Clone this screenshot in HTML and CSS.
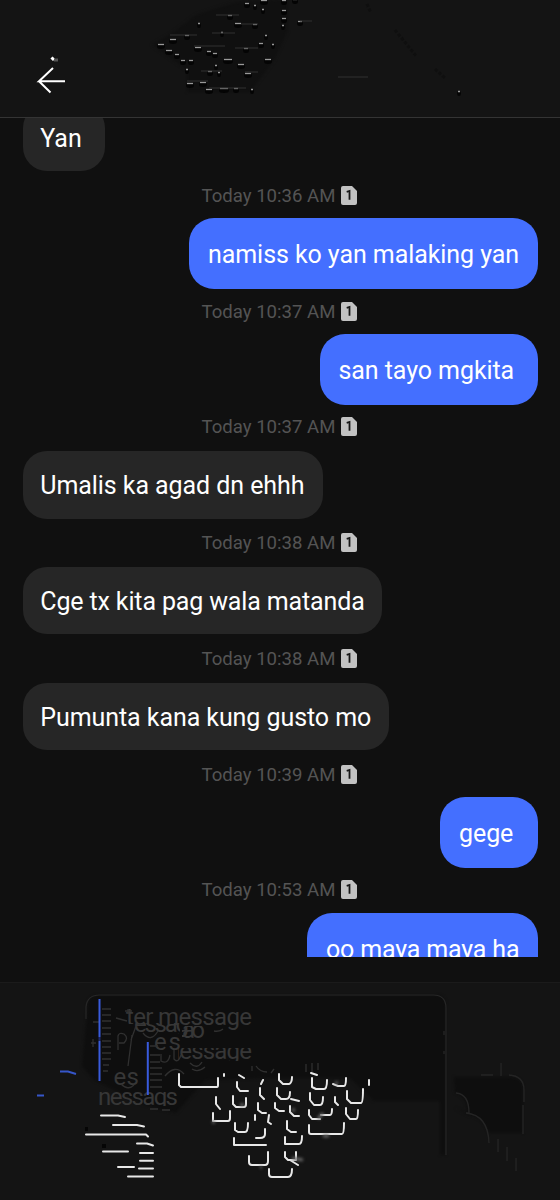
FILE: index.html
```html
<!DOCTYPE html>
<html lang="tl">
<head>
<meta charset="utf-8">
<title>Messages</title>
<link rel="stylesheet" href="styles.css">
</head>
<body>
<svg class="defs" width="0" height="0" aria-hidden="true">
  <symbol id="sim" viewBox="0 0 16 19"><path d="M2 0H11L16 5V17Q16 19 14 19H2Q0 19 0 17V2Q0 0 2 0Z" fill="#c2c2c2"/><path d="M5.7 5.8L8.5 5V13.8" fill="none" stroke="#171717" stroke-width="1.8"/></symbol>
</svg>
<main class="phone">
  <header class="header">
    <svg class="header-art" viewBox="0 0 560 117">
      <g class="soft"><path d="M196 15L236 2L288 0V30L274 60L250 92H187V70L152 45L174 32Z" fill="#101010"/></g>
      <g class="dents" id="dents"></g>
      <g class="thin"><path d="M216 15H239M241 24H258M170 35H197M212 33H235M194 46H225M235 48H258M201 71H222M245 72H258M187 81H208M209 88H246M338 77H368M300 21H312"/></g>
      <path d="M367 4L371 13M395 30L417 57M435 69L446 79" fill="none" stroke="#0f0f0f" stroke-width="3" stroke-dasharray="3 2"/>
      <path d="M65 81.300H39L53 68M39 81.300L50.500 92.500" class="arrow"/>
      <path d="M51.500 57.500L54 60" stroke="#fff" stroke-width="3"/><path d="M54 60H58" stroke="#555" stroke-width="3"/>
    </svg>
  </header>
  <section class="thread">
    <div class="bubble received first w-yan">Yan</div>
    <div class="group"><div class="time"><span>Today 10:36 AM</span><svg class="sim"><use href="#sim"/></svg></div><div class="bubble sent w-namiss">namiss ko yan malaking yan</div></div>
    <div class="group"><div class="time"><span>Today 10:37 AM</span><svg class="sim"><use href="#sim"/></svg></div><div class="bubble sent w-san">san tayo mgkita</div></div>
    <div class="group"><div class="time"><span>Today 10:37 AM</span><svg class="sim"><use href="#sim"/></svg></div><div class="bubble received w-umalis">Umalis ka agad dn ehhh</div></div>
    <div class="group"><div class="time"><span>Today 10:38 AM</span><svg class="sim"><use href="#sim"/></svg></div><div class="bubble received w-cge">Cge tx kita pag wala matanda</div></div>
    <div class="group"><div class="time"><span>Today 10:38 AM</span><svg class="sim"><use href="#sim"/></svg></div><div class="bubble received w-pumunta">Pumunta kana kung gusto mo</div></div>
    <div class="group"><div class="time"><span>Today 10:39 AM</span><svg class="sim"><use href="#sim"/></svg></div><div class="bubble sent w-gege">gege</div></div>
    <div class="group"><div class="time"><span>Today 10:53 AM</span><svg class="sim"><use href="#sim"/></svg></div><div class="bubble sent w-oo">oo maya maya ha</div></div>
  </section>
  <footer class="composer">
    <svg class="composer-art" viewBox="0 983 560 217">
      <defs>
        <clipPath id="c1"><path d="M120 1000H260V1033H158V1024H120Z"/></clipPath>
        <clipPath id="c2"><path d="M178 1048H260V1061H178Z"/></clipPath>
        <clipPath id="c3"><path d="M112 1066H140V1086H112Z"/></clipPath>
        <clipPath id="c4"><path d="M99 1090H178V1106H99Z"/></clipPath>
        <clipPath id="c5"><path d="M130 1023H180V1034H130ZM182 1026H205V1040H182Z"/></clipPath>
        <clipPath id="c6"><path d="M154 1036H182V1052H154Z"/></clipPath>
      </defs>
      <path class="soft" d="M88 1003Q90 995 100 995H436Q446 995 446 1007V1155H440V1101H374L350 1078H270L205 1080L176 1113L145 1105L94 1080L82 1066Z" fill="#0e0e0e"/>
      <path d="M86 1019V1007Q87 995 100 995H433Q446 995 446 1008V1155" fill="none" stroke="#272727" stroke-width="1.200"/>
      <path class="soft" d="M454 1077H508Q523 1077 523 1090V1133H489Q483 1116 468 1115L455 1108L467 1113Q469 1098 455 1092Z" fill="#0e0e0e"/>
      <path d="M481 1075H493M501 1063V1076M509 1075Q524 1076 524 1090V1102M523 1105V1134M456 1093Q469 1094 469 1113H466Q488 1115 489 1143M498 1139V1152M507 1147V1161M516 1158V1171M444 1031V1035M444 1051V1054" fill="none" stroke="#242424" stroke-width="1.400"/>
      <g class="ghost">
        <text x="126" y="1025" textLength="126" clip-path="url(#c1)">ter message</text>
        <text x="159" y="1059" textLength="93" clip-path="url(#c2)">message</text>
        <text x="92" y="1085" textLength="47" clip-path="url(#c3)">mes</text>
        <text x="98" y="1105" textLength="80" clip-path="url(#c4)">nessags</text>
        <text x="134" y="1032" textLength="55" clip-path="url(#c5)">essag</text>
        <text x="182" y="1038" textLength="23" clip-path="url(#c5)">ao</text>
        <text x="154" y="1050" textLength="27" clip-path="url(#c6)">es</text>
        <path class="ghost-lines" d="M102 1009H111M102 1015H111M102 1021H111M102 1028H111M102 1034H111M102 1041H111M102 1047H111M102 1053H111M102 1059H111M103 1065H109M103 1071H108M91 1043H96M93 1039V1047M93 1022H100M118 1050V1036Q119 1032 124 1034Q129 1038 124 1043H119M116 1018L127 1021M125 1011H132M128 1009V1014M128 1066L132 1035M136 1026L131 1040M143 1033Q151 1043 158 1031M150 1046H158M150 1055H160M150 1062H160M150 1068H162M150 1074H162M150 1080H162M150 1087H162M161 1054V1061Q168 1065 170 1055M174 1050V1059Q178 1064 181 1055M165 1076Q175 1064 184 1074M190 1063Q197 1070 202 1062M192 1069Q198 1073 205 1067M214 1031Q220 1032 223 1029M252 1066V1071M256 1066Q260 1072 267 1072M271 1073L274 1069M306 1064V1072M312 1063V1072M318 1063V1070M121 1084Q128 1091 134 1085M150 1109H158M162 1110H170"/>
      </g>
      <path d="M99.500 999V1037M99.500 1041V1081M147.800 1042V1095" fill="none" stroke="#395bdc" stroke-width="2"/>
      <path d="M99.500 1037V1041" stroke="#1c286f" stroke-width="2"/>
      <path d="M60 1071.500H68L76 1074M37 1095.500H44" fill="none" stroke="#3656c9" stroke-width="2"/>
      <path class="white" d="M101 1115.500H118L125 1117M113 1125H137L144 1126.500M86 1134.500H146L148 1136.500M137 1143.500H147L153 1145.500M103 1151.500H128M140 1153H153M140 1160.800H153M118 1167H134M139 1168.500H153M128 1176.500H153"/>
      <path class="white" d="M179 1074V1085L181 1087H217Q218 1087 218 1085V1078M224 1074V1076M239 1075L244 1078M237 1082V1087L240 1091H248M216 1097V1104L220 1109M233 1096V1104L236 1107H244Q246 1107 246 1104V1098M213 1113V1121H228Q230 1121 230 1118V1111M263 1080L261 1084M260 1088V1095L264 1099M279 1074V1080L283 1084H289Q292 1083 292 1077M277 1088V1095L281 1099H286Q290 1099 290 1092M291 1099L299 1101M258 1103V1110L262 1113H266M275 1103V1108L279 1111H284M290 1106V1112L294 1116H299M269 1115L268 1122L271 1124M255 1115V1120M235 1123V1130L238 1132H245Q248 1132 248 1123M265 1129V1134Q265 1138 260 1138H256M287 1121V1129L291 1132H296M234 1138V1145H266M285 1137V1144H299Q302 1144 302 1136M249 1156V1162Q249 1165 252 1165H265Q268 1165 268 1161V1152M285 1152V1157L288 1160H296V1152M290 1160L298 1165M269 1169V1174Q269 1177 272 1177H288Q292 1177 292 1169M311 1073L317 1075M312 1078V1087L316 1089H324Q327 1089 327 1080M333 1084L338 1086H344Q346 1086 346 1078M310 1093V1100L314 1105H320Q323 1105 323 1097M335 1097V1102L338 1105M347 1091V1099L351 1103H361Q363 1103 363 1089M309 1110V1115L312 1119H320M321 1115H330Q332 1115 332 1109M346 1108V1114L350 1119H356Q358 1119 358 1110M309 1125V1132Q309 1134 311 1134H342Q344 1134 344 1123M369 1080V1085"/>
      <path class="glow" d="M303 1160L292 1158M318 1119L323 1113M323 1136H329M240 1105H244M260 1167L262 1167M292 1110H295M335 1083H338M212 1122H215"/>
      <path d="M85 1129H88M102 1146H106" stroke="#050505" stroke-width="4"/>
    </svg>
  </footer>
</main>
<script src="art.js"></script>
</body>
</html>
```
FILE: styles.css
```css
body { margin: 0; background: #101010; font-family: Roboto, "Noto Sans", sans-serif; }
.defs { display: block; }
.phone { width: 560px; height: 1200px; overflow: hidden; display: flex; flex-direction: column; }
.header { height: 117px; flex: none; background: #141414; border-bottom: 1px solid #343434; }
.header-art, .composer-art { display: block; width: 100%; height: 100%; }
.arrow { fill: none; stroke: #fff; stroke-width: 2; }
.thin path { fill: none; stroke: #303030; stroke-width: 1; }
.soft { filter: blur(1.5px); }
.thread { height: 839px; flex: none; overflow: hidden; display: flex; flex-direction: column; }
.group { flex: none; height: 115.750px; display: flex; flex-direction: column; }
.time { height: 46px; flex: none; display: flex; align-items: center; gap: 6px; padding-left: 201.500px; color: #545454; font-size: 18.600px; line-height: 22px; }
.time span { width: 133.500px; white-space: nowrap; padding-top: 1px; }
.sim { width: 16px; height: 19px; flex: none; }
.bubble { box-sizing: border-box; flex: none; color: #fff; font-size: 25px; line-height: 30px; letter-spacing: -0.070px; white-space: nowrap; border-radius: 24px; }
.received { align-self: flex-start; height: 67.500px; margin: 1.300px 0 0 23.300px; padding: 20.300px 17px 0; background: #262626; }
.sent { align-self: flex-end; height: 70.700px; margin-right: 22px; padding: 22px 19px 0; background: #446fff; border-radius: 25px; }
.first { margin-top: -14.500px; margin-bottom: 1.300px; }
.w-yan { width: 81.700px; }
.w-namiss { width: 349px; }
.w-san { width: 218.500px; }
.w-umalis { width: 299.500px; }
.w-cge { width: 358.700px; letter-spacing: -0.140px; }
.w-pumunta { width: 365.700px; }
.w-gege { width: 98px; }
.w-oo { width: 231px; letter-spacing: -0.150px; }
.composer { margin-top: 26px; height: 217px; flex: none; background: #141414; box-shadow: 0 -1px #1b1b1b; }
.ghost text { font-size: 24px; fill: #373737; }
.ghost-lines { fill: none; stroke: #303030; stroke-width: 1.300; }
.white { fill: none; stroke: #e8e8e8; stroke-width: 2; stroke-linejoin: round; stroke-linecap: round; }
.glow { fill: none; stroke: #666; stroke-width: 3; filter: blur(1.500px); }
.dents ellipse { fill: #040404; }
.dents path { stroke: #999; stroke-width: 1.300; }
```
FILE: art.js
```js
const points = [[247,4,3],[255,6,2],[264,1,4],[263,10,2],[230,16,3],[199,24,2],[238,24,4],[255,25,3],[222,33,2],[187,36,3],[173,40,4],[266,36,2],[161,45,4],[169,51,4],[198,48,4],[177,55,3],[209,52,3],[215,54,3],[246,49,3],[261,44,3],[273,45,2],[183,61,3],[191,61,3],[228,60,5],[268,60,4],[187,70,2],[216,66,2],[241,65,4],[210,72,3],[219,73,2],[248,74,4],[190,84,4],[203,83,4],[209,90,4],[224,89,5],[236,89,3],[252,90,2],[284,1,3],[295,0,3],[284,11,3],[284,19,3],[283,26,2],[300,22,3],[459,92,2]];
document.getElementById('dents').innerHTML = points.map(([x, y, r]) =>
  `<ellipse cx="${x}" cy="${y + 1.5}" rx="${r}" ry="2.5"/><path d="M${x - r + 1} ${y - 0.5}H${x + r - 1}"/>`).join('');
```
